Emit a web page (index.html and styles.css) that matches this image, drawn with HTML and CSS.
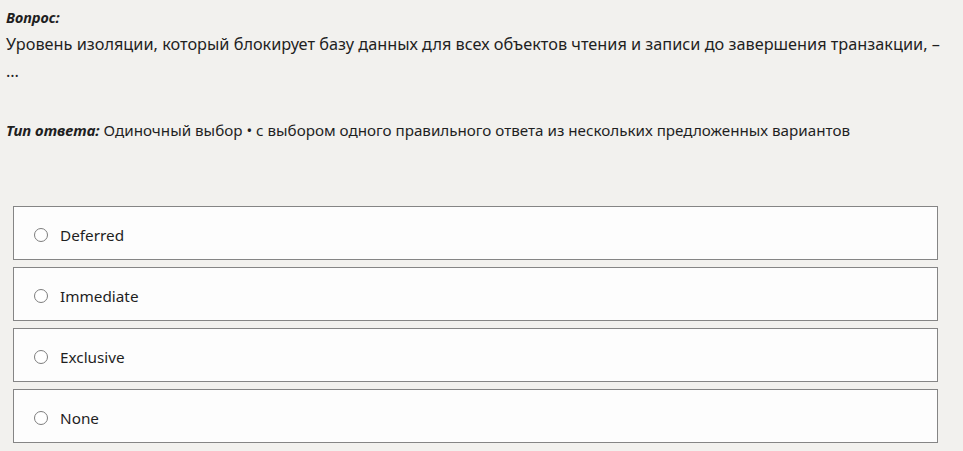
FILE: index.html
```html
<!DOCTYPE html>
<html lang="ru">
<head>
<meta charset="utf-8">
<link rel="stylesheet" href="styles.css">
</head>
<body>
<div class="page">
  <div class="question">
    <div class="label">Вопрос:</div>
    <div class="qtext">Уровень изоляции, который блокирует базу данных для всех объектов чтения и записи до завершения транзакции, –<br>…</div>
  </div>
  <div class="type"><span class="label">Тип ответа:</span> Одиночный выбор • с выбором одного правильного ответа из нескольких предложенных вариантов</div>
  <div class="options">
    <label class="option"><span class="radio"></span><span class="otext">Deferred</span></label>
    <label class="option"><span class="radio"></span><span class="otext">Immediate</span></label>
    <label class="option"><span class="radio"></span><span class="otext">Exclusive</span></label>
    <label class="option"><span class="radio"></span><span class="otext">None</span></label>
  </div>
</div>
</body>
</html>
```
FILE: styles.css
```css
html, body {
  margin: 0;
  padding: 0;
  background: #f2f1ee;
}
body {
  font-family: "Noto Sans", "Open Sans", sans-serif;
  font-size: 15px;
  color: #1f1f1f;
}
.page {
  padding: 4px 15px 0 6px;
}
.question {
  line-height: 27px;
}
.label {
  font-weight: bold;
  font-style: italic;
  font-size: 14.5px;
}
.qtext {
  font-size: 16.3px;
  line-height: 27px;
}
.type {
  margin-top: 32px;
  line-height: 27px;
  font-size: 15.2px;
}
.type .label {
  font-size: 15px;
}
.options {
  margin-top: 62px;
  margin-left: 7px;
  margin-right: 10px;
  display: flex;
  flex-direction: column;
  gap: 7px;
}
.option {
  box-sizing: border-box;
  display: flex;
  align-items: center;
  height: 54px;
  border: 1px solid #858585;
  background: #fdfdfd;
  padding: 3px 0 0 20px;
}
.radio {
  width: 12px;
  height: 12px;
  border: 1px solid #7d7d7d;
  border-radius: 50%;
  background: #fff;
  margin-right: 12px;
}
.otext {
  font-size: 15.3px;
}
```
